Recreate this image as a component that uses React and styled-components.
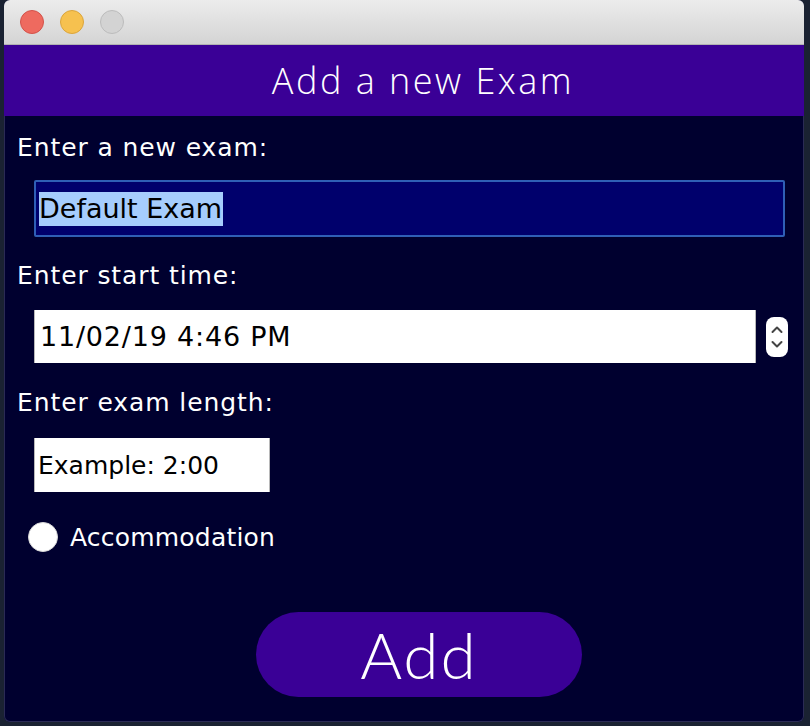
import React from 'react'
import styled, { createGlobalStyle } from 'styled-components';

const GlobalStyle = createGlobalStyle`
    html, body {
        margin: 0;
        padding: 0;
        background: #1a2232;
    }
    #root {
        width: 810px;
        height: 726px;
    }
`;

const App = () => {
return (
    <>
        <GlobalStyle/>
        <Desktop>
            <Window>
                <TitleBar>
                    <Light $fill="#ee6a5f" $edge="#d3524a"/>
                    <Light $fill="#f6c14f" $edge="#dba53c"/>
                    <Light $fill="#d3d3d3" $edge="#bcbcbc"/>
                </TitleBar>
                <Header>Add a new Exam</Header>
                <Body>
                    <Label>Enter a new exam:</Label>
                    <NameField>
                        <Selected>Default Exam</Selected>
                    </NameField>

                    <Label $top={24}>Enter start time:</Label>
                    <DateRow>
                        <WhiteField $width={722} $spacing={0.8}>11/02/19 4:46 PM</WhiteField>
                        <Spinner>
                            <svg width="22" height="40" viewBox="0 0 22 40">
                                <path d="M6.5 15 L11 10.5 L15.5 15" fill="none" stroke="#444" strokeWidth="2" strokeLinecap="round" strokeLinejoin="round"/>
                                <path d="M6.5 25 L11 29.5 L15.5 25" fill="none" stroke="#444" strokeWidth="2" strokeLinecap="round" strokeLinejoin="round"/>
                            </svg>
                        </Spinner>
                    </DateRow>

                    <Label $top={25}>Enter exam length:</Label>
                    <WhiteField $width={236} $top={20} $height={54} $size={25} $pad={3}>Example: 2:00</WhiteField>

                    <RadioRow>
                        <Radio/>
                        <RadioLabel>Accommodation</RadioLabel>
                    </RadioRow>

                    <ButtonRow>
                        <AddButton>Add</AddButton>
                    </ButtonRow>
                </Body>
            </Window>
        </Desktop>
    </>
)
}
export default App

const Desktop = styled.div`
    width: 810px;
    height: 726px;
    overflow: hidden;
    padding-left: 4px;
    box-sizing: border-box;
`;

const Window = styled.div`
    width: 800px;
    height: 722px;
    display: flex;
    flex-direction: column;
    border-radius: 6px;
    overflow: hidden;
    background: #00002f;
    box-shadow: inset 0 0 0 1px #2a2a55;
`;

const TitleBar = styled.div`
    height: 44px;
    flex-shrink: 0;
    display: flex;
    align-items: center;
    gap: 16px;
    padding-left: 16px;
    background: linear-gradient(#ececec, #d4d4d4);
    border-bottom: 1px solid #b2b2b2;
`;

const Light = styled.div`
    width: 22px;
    height: 22px;
    border-radius: 50%;
    background: ${p => p.$fill};
    border: 1px solid ${p => p.$edge};
`;

const Header = styled.div`
    height: 71px;
    flex-shrink: 0;
    display: flex;
    align-items: center;
    justify-content: center;
    padding-left: 38px;
    background: #3a0096;
    color: #ffffff;
    font-family: 'Open Sans', 'Noto Sans', sans-serif;
    font-weight: 300;
    font-size: 36px;
    letter-spacing: 2.5px;
`;

const Body = styled.div`
    display: flex;
    flex-direction: column;
    align-items: flex-start;
    padding: 17px 0 0 13px;
`;

const Label = styled.div`
    margin-top: ${p => p.$top || 0}px;
    font-family: 'DejaVu Sans', sans-serif;
    font-size: 25px;
    line-height: 30px;
    letter-spacing: 0.9px;
    color: #ffffff;
`;

const NameField = styled.div`
    margin: 17px 0 0 17px;
    width: 751px;
    height: 57px;
    box-sizing: border-box;
    display: flex;
    align-items: center;
    padding-left: 3px;
    background: #00006c;
    border: 2px solid #2f5fb6;
    border-radius: 2px;
`;

const Selected = styled.span`
    background: #a6cdfd;
    color: #000000;
    font-family: 'DejaVu Sans', sans-serif;
    font-size: 27px;
    line-height: 34px;
    padding-right: 1px;
`;

const DateRow = styled.div`
    margin: 19px 0 0 17px;
    display: flex;
    align-items: center;
    gap: 10px;
`;

const WhiteField = styled.div`
    margin-top: ${p => p.$top || 0}px;
    margin-left: ${p => (p.$top ? 17 : 0)}px;
    width: ${p => p.$width}px;
    height: ${p => p.$height || 53}px;
    box-sizing: border-box;
    display: flex;
    align-items: center;
    padding-left: ${p => p.$pad || 5}px;
    background: #ffffff;
    border-left: 1px solid #b8b8b8;
    border-right: 1px solid #b8b8b8;
    color: #000000;
    font-family: 'DejaVu Sans', sans-serif;
    font-size: ${p => p.$size || 27}px;
    letter-spacing: ${p => p.$spacing || 0}px;
`;

const Spinner = styled.div`
    width: 22px;
    height: 40px;
    border-radius: 8px;
    background: #ffffff;
    display: flex;
`;

const RadioRow = styled.div`
    margin: 30px 0 0 11px;
    display: flex;
    align-items: center;
    gap: 12px;
    height: 30px;
`;

const Radio = styled.div`
    width: 30px;
    height: 30px;
    border-radius: 50%;
    box-sizing: border-box;
    background: #ffffff;
    border: 1px solid #d8d8d8;
`;

const RadioLabel = styled.span`
    font-family: 'DejaVu Sans', sans-serif;
    font-size: 25px;
    letter-spacing: 0.2px;
    color: #ffffff;
`;

const ButtonRow = styled.div`
    align-self: stretch;
    display: flex;
    justify-content: center;
    margin-top: 60px;
    padding-left: 17px;
`;

const AddButton = styled.button`
    width: 326px;
    height: 85px;
    border: none;
    border-radius: 43px;
    background: #3a0096;
    color: #ffffff;
    font-family: 'Lato', 'Noto Sans', sans-serif;
    font-weight: 300;
    font-size: 64px;
    letter-spacing: 2px;
    padding: 0;
`;
